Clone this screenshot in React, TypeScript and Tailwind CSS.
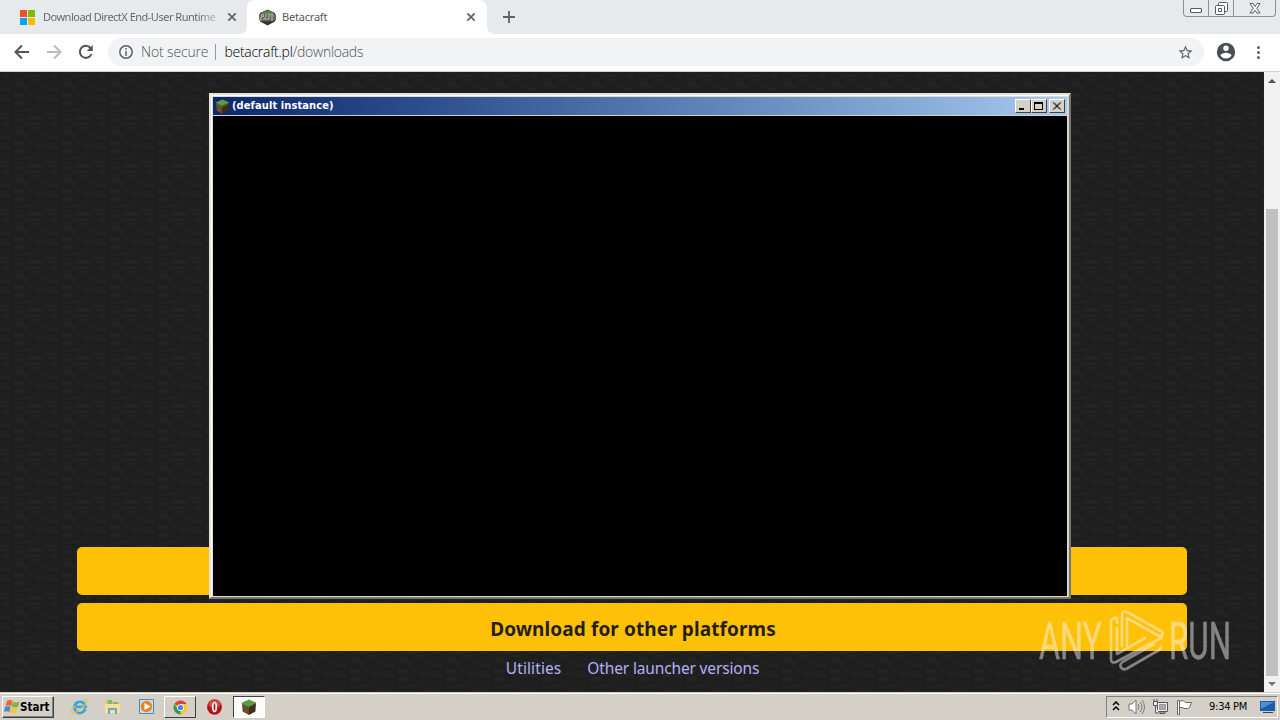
import React from 'react';

const Close = () => (
  <svg width="10" height="10" viewBox="0 0 10 10" fill="none" stroke="#5f6368" strokeWidth="1.7"><path d="M1.3 1.3 8.7 8.7M8.7 1.3 1.3 8.7" /></svg>
);

const Cube = ({ size }: { size: number }) => (
  <svg width={size} height={size} viewBox="0 0 16 16">
    <path d="M1 4 8 7.4V16L1.6 12.4Z" fill="#68452b" />
    <path d="M15 4 8 7.4V16L14.4 12.4Z" fill="#3d291b" />
    <path d="M8 0.4 15.4 3.7 8 7.5 0.6 3.7Z" fill="#619b40" />
    <path d="M.8 4 8 7.5V9.6L6.5 8 5 8.6 3.8 6.7 2.4 7.1Z" fill="#487632" />
    <path d="M15.2 4 8 7.5V9.6L9.7 8 11 8.2 12.5 6.3 14 6.7Z" fill="#31551f" />
    <path d="M3 9h1v1H3zM5 11h1v1H5zM4 12h1v1H4z" fill="#926a45" />
    <path d="M10 11h1v1h-1zM12 9h1v1h-1z" fill="#5b3e26" />
  </svg>
);

const BetaLogo = () => (
  <svg width="17" height="17" viewBox="0 0 17 17">
    <path d="M1 4 8.5.5 16 4V12.5L8.5 16.5 1 12.5Z" fill="#34362f" />
    <path d="M1.5 4 8.5.8 15.5 4 14 5H3Z" fill="#527f49" />
    <path d="M0 5.2h3l1-.8h9l1 .8h3v6h-2l-1 1H3l-1-1H0Z" fill="#62685e" />
    <path d="M2.5 5.5v2h2v-2zM6 5h2M6 7h2M9 5h2M10 5v3M12 8V5h2v3M3 9H1v2h2M5 11V9h2v2M9 11V9h2M12 9h2M13 9v3" stroke="#c5cabb" strokeWidth=".8" fill="none" />
  </svg>
);

const Texture = () => (
  <svg className="absolute inset-0 h-full w-full" aria-hidden="true">
    <defs>
      <pattern id="stone" width="48" height="48" patternUnits="userSpaceOnUse" y="-12">
        <rect width="48" height="48" fill="#1f1f1f" />
        <path d="M24 0h10v3H24zM37 5h11v2H37zM0 5h8v2H0zM27 8h15v4H27zM15 10h8v3h-8zM1 14h7v4H1zM26 15h18v3H26zM16 22h8v5h-8zM24 26h6v3h-6zM39 24h8v4h-8zM0 28h10v3H0zM13 34h11v3H13zM28 33h8v4h-8zM38 36h9v5h-9zM1 38h9v3H1zM16 41h8v4h-8z" fill="#232323" />
        <g stroke="#1a1a1a" fill="none">
          <path d="M11 0v13l2 3v9M24 4c10 5 17 2 24-1M30 13h14l4-2M0 20h9l3 4M27 22l6-4 13-1M26 32c1-5 6-7 11-5M35 30v5M12 31v17M15 31h8M24 40c9 3 14 2 21-4M0 44h9M15 47h9M24 22h10M44 25l-7 3M0 34h9" />
        </g>
        <path d="M0 36h7M14 35h10M26 0h10M15 3h8M1 10h8M29 20h13" stroke="#262626" />
      </pattern>
    </defs>
    <rect width="100%" height="100%" fill="url(#stone)" />
  </svg>
);

const TitleButton = ({ children, extra }: { children: React.ReactNode; extra?: string }) => (
  <div className={`flex h-[14px] w-4 items-center justify-center border border-t-white border-l-white border-r-[#404040] border-b-[#404040] bg-[#d4d0c8] ${extra ?? ''}`}>
    <svg width="12" height="11" viewBox="0 0 12 11" shapeRendering="crispEdges" stroke="#000" fill="none">{children}</svg>
  </div>
);

const GameWindow = () => (
  <div className="absolute left-[209px] top-[93px] z-10 flex h-[506px] w-[862px] flex-col border-2 border-t-[#e4e1d9] border-l-[#e4e1d9] border-r-[#77756f] border-b-[#77756f] bg-[#d4d0c8] px-px pt-px shadow-[inset_1px_1px_0_#fff]">
    <div className="flex min-h-0 flex-1 flex-col border border-[#dedbd4]">
      <div className="flex h-[18px] items-center bg-gradient-to-r from-[#0c276c] to-[#a6caf0] pl-[2px] pr-[2px]">
        <Cube size={15} />
        <span className="ml-[2px] font-['DejaVu_Sans_Condensed','DejaVu_Sans',sans-serif] text-[11px] font-bold leading-[18px] tracking-[0.1px] text-white">(default instance)</span>
        <div className="ml-auto flex">
          <TitleButton><path d="M2 8.5h5M2 7.5h5" /></TitleButton>
          <TitleButton><path d="M1.5 1.5h8v7h-8zM1 2.5h9" /></TitleButton>
          <TitleButton extra="ml-[2px]"><path d="m2 1.5 7 7M3 1.5l7 7M9 1.5l-7 7M10 1.5l-7 7" shapeRendering="auto" strokeWidth=".8" /></TitleButton>
        </div>
      </div>
      <div className="mt-px flex-1 bg-black" />
    </div>
  </div>
);

const Watermark = () => (
  <svg className="absolute left-[1036px] top-[606px] z-20" width="204" height="72" viewBox="0 0 204 72" fill="none" opacity=".48">
    <g fill="#f3f3f3" stroke="#f3f3f3" strokeWidth=".5" fontFamily="Roboto, sans-serif" fontWeight="400" fontSize="52">
      <text x="3" y="53" textLength="63" lengthAdjust="spacingAndGlyphs">ANY</text>
      <text x="133" y="53" textLength="62" lengthAdjust="spacingAndGlyphs">RUN</text>
    </g>
    <g stroke="#f3f3f3" strokeWidth="2.6" strokeLinejoin="round" strokeLinecap="round">
      <path d="M81 17V12q-5-1-6 4V53q0 5 5 3L126 31.5" />
      <path d="M81 22V48L109 32" />
      <path d="M86 40V9q0-5 5-3L125 25q3 2 1 4-2 2-5 0L91 12V40" />
      <path d="M118 38 88 55q-5 3-3 6.500 3 3 6 1L123 44q3-2 2-4" />
    </g>
  </svg>
);

const Tray = () => (
  <div className="flex h-[22px] w-[172px] items-center border border-t-[#808080] border-l-[#808080] border-r-white border-b-white pl-[5px]">
    <svg width="8" height="12" viewBox="0 0 8 12" fill="none" stroke="#000" strokeWidth="1.5"><path d="m1 4 3-3 3 3M1 9l3-3 3 3" /></svg>
    <svg className="ml-[8px]" width="17" height="16" viewBox="0 0 17 16" fill="#fff" stroke="#777" strokeWidth="1"><path d="M1 5h3l4-4v14l-4-4H1Z" /><path d="M10 5q2 3 0 6M12 3q4 5 0 10M14 1q5 7 0 14" fill="none" /></svg>
    <svg className="ml-[7px]" width="17" height="16" viewBox="0 0 17 16" fill="#eee" stroke="#555"><path d="M5.5 3.500h10v9h-10z" /><path d="M7.500 5.500h6v5h-6z" fill="#aaa" stroke="#999" /><path d="M8 13h5v1.500H8zM1.5 2.5h4v4h-4zM2 0v2M5 0v2M3.5 7v7H7" /></svg>
    <svg className="ml-[7px]" width="17" height="16" viewBox="0 0 17 16" fill="#fff" stroke="#666"><path d="M1.5 1.5h2v14h-2z" /><path d="M3.5 2.5q3-2 5 0l1 1h6l-2 5-2 1H8l-2-1H3.5Z" /></svg>
    <span className="ml-[16px] whitespace-nowrap font-['DejaVu_Sans_Condensed','DejaVu_Sans',sans-serif] text-[11px] tracking-[-0.25px] text-black">9:34 PM</span>
    <svg className="ml-auto mr-px" width="16" height="14" viewBox="0 0 16 14"><path d="M0 1h15v10H0z" fill="#1c5daa" /><path d="M1 2h13L1 9z" fill="#4d91d2" /><path d="M3 12h10v1H3z" fill="#27456a" /></svg>
  </div>
);

const Taskbar = () => (
  <div className="flex h-7 items-center border-t border-[#d4d0c8] bg-[#d4d0c8] pl-[2px] shadow-[inset_0_1px_0_#fff]">
    <div className="mt-px flex h-[22px] w-[52px] items-center border border-t-white border-l-white border-r-[#404040] border-b-[#404040] pl-px shadow-[inset_-1px_-1px_0_#808080]">
      <svg className="shrink-0" width="16" height="16" viewBox="0 0 16 16"><path d="M3 2q3-2 5.500 0L7 7.300Q4 5.5 1.5 7Z" fill="#ed6732" /><path d="M9 2.5q3 2 6.500 0L14 8Q10 9 7.5 7.5Z" fill="#83b73c" /><path d="M1 8q3-1.5 5.500 0L5.300 13Q2 11.5 0 13Z" fill="#4689c8" /><path d="M7 8.5q3 2 6.500 0L12 14Q8 15 5.5 13.5Z" fill="#f5c443" /></svg>
      <span className="mt-px font-['DejaVu_Sans_Condensed','DejaVu_Sans',sans-serif] text-[11.5px] font-bold tracking-[0px] text-black">Start</span>
    </div>
    <svg className="ml-[17px]" width="17" height="17" viewBox="0 0 17 17" fill="none"><path d="M14.300 11A5.600 5.600 0 1 1 14.500 8.800H5" stroke="#38a5dc" strokeWidth="2.700" /><path d="M12 2.500q4-2.500 4 .5-1 4-7 8.500T1 15q-2-2 3-7" stroke="#e8bf4b" strokeWidth="1.2" /></svg>
    <svg className="ml-[17px]" width="16" height="16" viewBox="0 0 16 16"><path d="M1 2h6l1 2h6v10H1Z" fill="#dcbd66" /><path d="M3 1h4v5H3zM8 3h5v5H8z" fill="#83b86b" /><path d="M0 5h15v9H0z" fill="#f7df94" /><path d="M3 15V9h9v6h-2v-4H5v4Z" fill="#64a9d8" /></svg>
    <svg className="ml-[17px]" width="17" height="17" viewBox="0 0 17 17"><path d="M1.5 1.5h14v14h-14z" fill="#c4e1f8" stroke="#4c87bd" /><circle cx="8.5" cy="8.5" r="5.7" fill="#ef8219" /><path d="m6.5 5 6 3.5-6 3.5Z" fill="#fff" /></svg>
    <div className="ml-[9px] mt-px flex h-[22px] w-8 items-center justify-center border border-t-white border-l-white border-r-[#404040] border-b-[#404040]">
      <svg width="15" height="15" viewBox="0 0 16 16"><circle cx="8" cy="8" r="7.5" fill="#f7c739" /><path d="M8 8 1.5 4.3A7.5 7.5 0 0 1 14.5 4.3H8Z" fill="#db4437" /><path d="M8 8 8 15.5A7.5 7.5 0 0 1 1.5 4.3L5 9.6Z" fill="#309b59" /><circle cx="8" cy="8" r="3.6" fill="#fff" /><circle cx="8" cy="8" r="2.8" fill="#4285f4" /></svg>
    </div>
    <svg className="ml-[11px]" width="15" height="16" viewBox="0 0 15 16"><ellipse cx="7.5" cy="8" rx="7.4" ry="7.7" fill="#b41418" /><ellipse cx="7.5" cy="5" rx="6" ry="4" fill="#d84b43" /><ellipse cx="7.5" cy="8" rx="1.800" ry="4.500" fill="#c31b1d" stroke="#fff" strokeWidth="1.700" /></svg>
    <div className="ml-[11px] mt-px flex h-[22px] w-8 items-center justify-center border border-t-[#404040] border-l-[#404040] border-r-white border-b-white bg-[#fbfbfa]"><Cube size={16} /></div>
    <div className="ml-auto mr-[2px] mt-px"><Tray /></div>
  </div>
);

export default function App() {
  return (
    <div className="relative flex h-[720px] w-[1280px] flex-col overflow-hidden bg-white">
      <header className="flex h-[34px] shrink-0 bg-[#e7eaed] font-['Noto_Sans',sans-serif]">
        <div className="flex w-[247px] items-center pl-[20px]">
          <div className="grid grid-cols-2 gap-px"><i className="size-[7px] bg-[#f25022]" /><i className="size-[7px] bg-[#7fba00]" /><i className="size-[7px] bg-[#00a4ef]" /><i className="size-[7px] bg-[#ffb900]" /></div>
          <span className="ml-[8px] w-[175px] whitespace-nowrap bg-gradient-to-r from-[#5f6368] from-88% to-[#c8cbd0] bg-clip-text text-[11px] tracking-[-0.5px] text-transparent">Download DirectX End-User Runtime</span>
          <span className="ml-[9px]"><Close /></span>
        </div>
        <div className="relative flex w-[240px] items-center rounded-t-lg bg-white pl-[12px]">
          <BetaLogo />
          <span className="ml-[6px] text-[11px] tracking-[-0.2px] text-[#55585c]">Betacraft</span>
          <span className="ml-auto mr-[11px]"><Close /></span>
          <svg className="absolute -left-2 bottom-0" width="8" height="8"><path d="M8 0v8H0Q8 8 8 0" fill="#fff" /></svg>
          <svg className="absolute -right-2 bottom-0" width="8" height="8"><path d="M0 0v8h8Q0 8 0 0" fill="#fff" /></svg>
        </div>
        <svg className="ml-[15px] mt-[10px]" width="14" height="14" stroke="#5f6368" strokeWidth="1.800"><path d="M7 1v12M1 7h12" /></svg>
        <div className="ml-auto mr-[4px] flex h-[17px] w-[93px] rounded-b-[4px] border border-t-0 border-[#8d9196] text-[#5f6368]">
          <div className="flex w-[25px] items-end justify-center border-r border-[#8d9196] pb-[3px]"><i className="h-[5px] w-[12px] rounded-[1px] border border-[#555b61] bg-white" /></div>
          <div className="flex w-[25px] items-center justify-center border-r border-[#8d9196]"><svg width="13" height="13" fill="#fff" stroke="#555b61"><rect x="3.500" y=".5" width="9" height="9" rx="1" /><rect x=".5" y="3.5" width="9" height="9" rx="1" /><path d="M3.5 6.5h3v3h-3z" /></svg></div>
          <div className="flex flex-1 items-center justify-center"><svg width="12" height="11" viewBox="0 0 12 11" fill="#fff" stroke="#555b61"><path d="M1 .5h3l2 3 2-3h3L7.8 5.3 11 10H8L6 7.3 4 10H1l3.2-4.7Z" /></svg></div>
        </div>
      </header>
      <nav className="flex h-[38px] shrink-0 items-center border-b border-[#cfd1d4] bg-white pb-px pl-[14px] font-['Open_Sans',sans-serif] text-[14px] text-[#5f6368]">
        <svg width="16" height="16" fill="none" stroke="#515459" strokeWidth="2"><path d="M15 8H2M8 1.5 1.5 8 8 14.5" /></svg>
        <svg className="ml-[16px]" width="16" height="16" fill="none" stroke="#bbbcbe" strokeWidth="2"><path d="M1 8h13M8 1.5 14.5 8 8 14.5" /></svg>
        <svg className="ml-[16px]" width="16" height="16" fill="none" stroke="#515459" strokeWidth="2"><path d="M13.5 10A6 6 0 1 1 12.5 4" /><path d="M14.8 1v6H8.8Z" fill="#515459" stroke="none" /></svg>
        <div className="ml-[14px] flex h-7 w-[1096px] items-center rounded-full bg-[#f1f3f4] pl-[11px] pr-[10px]">
          <svg width="14" height="14" fill="none" stroke="#5f6368" strokeWidth="1.5"><circle cx="7" cy="7" r="6.2" /><path d="M7 6v5M7 3v1.7" /></svg>
          <span className="-mt-[2px] ml-[8px] tracking-[-0.15px] font-light text-[#4f5358]">Not secure</span>
          <span className="ml-[7px] h-4 w-px bg-[#96999d]" />
          <span className="-mt-[2px] ml-[8px] font-light tracking-[-0.27px] text-[#4f5358]"><b className="font-light text-black">betacraft.pl</b>/downloads</span>
          <svg className="ml-auto" width="17" height="17" viewBox="0 0 24 24" fill="#5f6368"><path d="m22 9.24-7.19-.62L12 2 9.19 8.63 2 9.24l5.46 4.73L5.82 21 12 17.27 18.18 21l-1.63-7.03zM12 15.4l-3.76 2.27 1-4.28-3.32-2.88 4.38-.38L12 6.1l1.71 4.04 4.38.38-3.32 2.88 1 4.28z" /></svg>
        </div>
        <svg className="ml-[11px]" width="22" height="22" viewBox="0 0 24 24" fill="#4b4e53"><path d="M12 2a10 10 0 1 0 0 20 10 10 0 0 0 0-20m0 3a3 3 0 1 1 0 6 3 3 0 0 1 0-6m0 14.2a7.2 7.2 0 0 1-6-3.2c0-2 4-3.1 6-3.1s6 1.1 6 3.1a7.2 7.2 0 0 1-6 3.2" /></svg>
        <div className="ml-[20px] flex flex-col gap-[2px]"><i className="size-[3px] rounded-full bg-[#5f6368]" /><i className="size-[3px] rounded-full bg-[#5f6368]" /><i className="size-[3px] rounded-full bg-[#5f6368]" /></div>
      </nav>
      <main className="flex h-[620px] shrink-0">
        <section className="relative flex w-[1264px] flex-col justify-end bg-[#1e1e1e] pl-[77px] pr-[77px] font-['Noto_Sans',sans-serif]">
          <Texture />
          <div className="relative h-12 rounded-[5px] bg-[#ffc107]" />
          <div className="relative mt-2 flex h-12 items-center justify-center rounded-[5px] bg-[#ffc107] pl-[2px] pt-[4px] text-[19px] font-bold tracking-[0.1px] text-[#241e17]"><span>Download for other platforms</span></div>
          <div className="relative flex h-[41px] justify-center gap-[26px] pl-px pt-[5px] text-[15.500px] leading-6 text-[#b3b0f5]"><a className="tracking-[0.1px]">Utilities</a><a className="tracking-[-0.15px]">Other launcher versions</a></div>
        </section>
        <aside className="flex w-4 flex-col items-center bg-[#f1f1f1] pb-[5px] pt-[6px]">
          <svg width="8" height="5"><path d="M0 5 4 1l4 4Z" fill="#505050" /></svg>
          <div className="mt-[126px] w-3 flex-1 bg-[#c1c1c1]" />
          <svg className="mt-[6px]" width="8" height="5"><path d="m0 0 4 4 4-4Z" fill="#777" /></svg>
        </aside>
      </main>
      <Taskbar />
      <GameWindow />
      <Watermark />
    </div>
  );
}
